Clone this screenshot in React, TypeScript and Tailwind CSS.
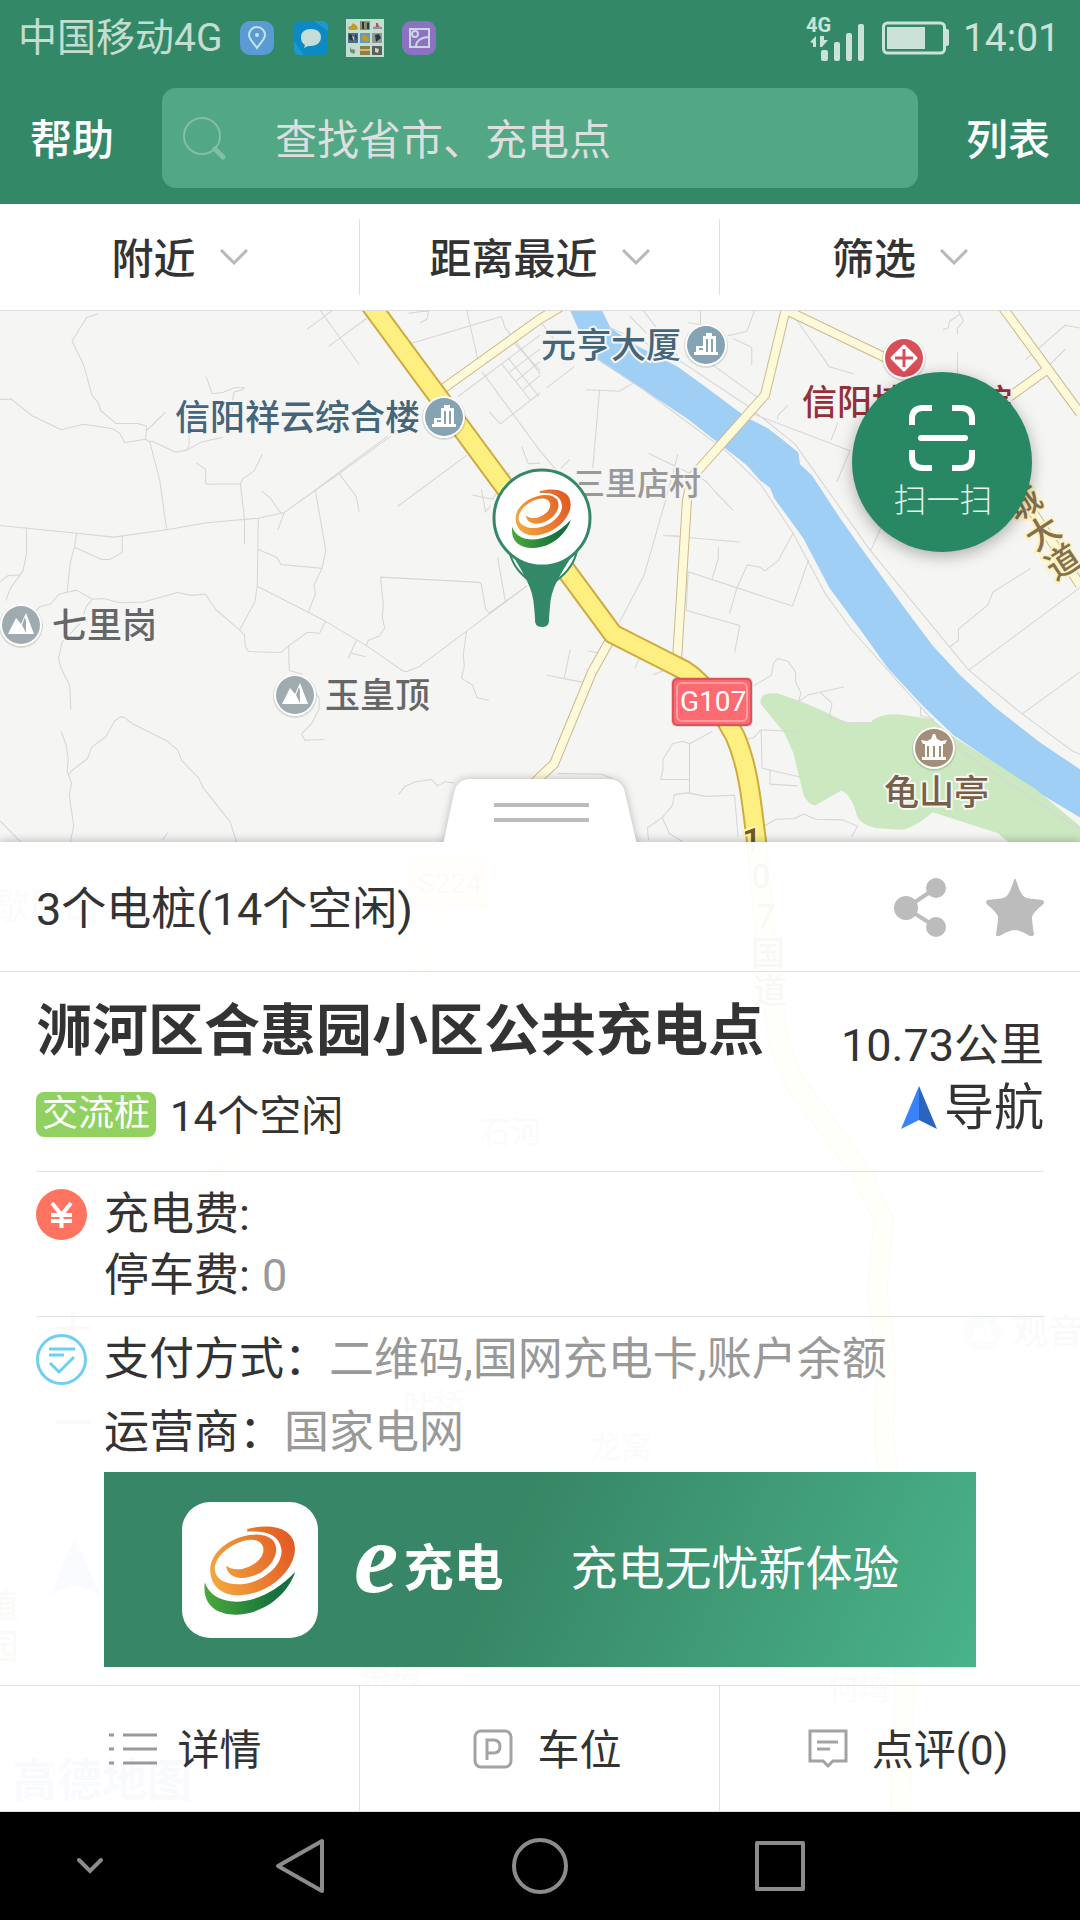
import React from 'react';

const ink = 'stroke-[#8c8c8c] fill-none';

function Logo({ x, y, width, height, id }: { x?: number; y?: number; width: number; height: number; id: string }) {
  return (
    <svg x={x} y={y} width={width} height={height} viewBox="590 705 272 273" preserveAspectRatio="none" aria-hidden="true">
      <defs>
        <linearGradient id={id + 'o'} x1="0" y1="0.6" x2="1" y2="0.3">
          <stop offset="0" stopColor="#f3a53e" />
          <stop offset="1" stopColor="#e25a25" />
        </linearGradient>
        <linearGradient id={id + 'g'} x1="0" y1="0" x2="1" y2="0">
          <stop offset="0" stopColor="#4aa93c" />
          <stop offset="0.8" stopColor="#15713b" />
        </linearGradient>
      </defs>
      <path
        fill={`url(#${id}o)`}
        d="M718 720C780 702 858 712 856 782C852 850 772 917 690 917C636 915 608 880 611 835C616 780 682 737 745 736C788 737 806 760 801 790C792 834 745 864 702 865C675 864 658 850 657 828C668 838 688 842 706 838C742 828 770 802 764 774C758 752 734 748 708 755C664 768 624 804 624 840C626 872 662 888 708 883C774 873 822 822 817 780C810 736 772 724 718 728Z"
      />
      <path fill={`url(#${id}g)`} d="M595 878C622 960 756 958 857 847C834 918 764 971 690 974C622 975 588 940 595 878Z" />
    </svg>
  );
}

function Poi({ x, y, kind }: { x: number; y: number; kind: 'building' | 'hill' | 'temple' | 'hospital' }) {
  const tone = { building: '#86a3b3', hill: '#9fabb1', temple: '#a28e79', hospital: '#d94f58' }[kind];
  return (
    <g transform={`translate(${x} ${y})`}>
      <circle cy="1" r="22" fill="#000" opacity="0.12" />
      <circle r="21" fill="#fff" />
      <circle r="19" fill={tone} />
      {kind === 'building' && (
        <path fill="#fff" fillRule="evenodd" d="M-12 10v-3h2v-6h7v-10h3v-3h6v3h4v16h2v3zM0-6v13h2v-13zM5-6v13h2v-13zM-7 3v2h4v-2z" />
      )}
      {kind === 'hill' && <path fill="#fff" fillRule="evenodd" d="M-13 9L-5-7L0-1L5-12L13 9zM4-8L1 0L5 8L5-4z" />}
      {kind === 'temple' && (
        <path fill="#fff" d="M-1-14h2l2 5l4 2l6-1l-2 4h-2v13h3v3h-24v-3h3v-13h-2l-2-4l6 1l4-2zM-7-2v11h2v-11zM-1-2v11h2v-11zM5-2v11h2v-11z" fillRule="evenodd" />
      )}
      {kind === 'hospital' && (
        <>
          <path fill="#fff" stroke="#fff" strokeWidth="3" strokeLinejoin="round" d="M0-12L12 0L0 12L-12 0z" />
          <path stroke="#d94f58" strokeWidth="3" d="M0-9V9M-9 0H9" />
        </>
      )}
    </g>
  );
}

function MapCanvas() {
  return (
    <svg
      className="absolute inset-0 h-full w-full"
      viewBox="0 311 1080 1501"
      preserveAspectRatio="xMidYMin slice"
      role="img"
      aria-label="地图"
    >
      <rect x="0" y="311" width="1080" height="1501" fill="#f5f5f4" />
      <g transform="matrix(.3444 0 0 .3508 540 300)">
        <path
          fill="#a0cff5"
          d="M83 20L175 20L205 80L280 130L400 190L470 240L600 335L660 365L700 395L750 435L755 468L790 500L870 620L920 690L1060 880L1140 985L1220 1070L1320 1160L1450 1260L1568 1338V1475L1440 1400L1290 1300L1200 1240L1110 1155L1010 1050L930 940L840 820L765 680L680 565L668 535L640 515L600 470L540 425L430 340L300 255L200 190L160 165L110 80Z"
        />
        <path
          fill="#cbe8c0"
          d="M640 1150C640 1125 655 1118 690 1122L760 1145L820 1170L890 1205L960 1203Q990 1175 1050 1182L1140 1195L1200 1245L1290 1300L1440 1395L1568 1500V1560L1360 1545L1330 1520L1140 1460Q1080 1510 1045 1510L975 1505Q930 1495 920 1470Q905 1410 875 1398L800 1440Q780 1440 765 1410L735 1290L710 1235Z"
        />
      </g>
      <g fill="none" stroke="#d6d6d6" strokeWidth="3" strokeLinejoin="round">
        <g transform="matrix(.3444 0 0 .3508 0 300)">
          <path d="M284 40L252 50L209 117L243 185L267 272L285 292L292 315L337 352H400L426 360L423 397L362 406L348 380L328 367L243 354L178 370L93 330L32 282L0 284M423 397L435 405L464 515L484 655L330 676L223 665L0 643M484 655L600 635L750 622L825 606L915 542L1125 388M845 592L985 495L1135 388M435 402L446 404L510 434L543 428L585 405L648 391M426 372L480 320M549 380V415L543 428" />
          <path d="M599 220L616 267L648 263L680 250H710L705 256L680 262L675 285V318M570 465L597 482V522L603 525L698 524L705 510L738 487L762 440M698 524L710 626V697M760 545L785 565L817 610M825 606L807 655M750 622L747 816L740 860L696 941L627 883L596 838L557 842L516 834L417 861L347 863L300 851L268 853L222 827L173 838L145 868L118 873L100 890M747 816L895 890L945 916L1065 986L1168 1056L1180 1060L1217 1045L1355 944L1530 815M747 710L804 734L816 754L935 765L946 714L915 540M935 765L912 812L916 838L895 890M945 916L928 950L893 947L838 986L815 1005L722 1002L712 988L710 955L696 941M838 986L840 1056L875 1066L927 1135V1165L905 1207L876 1237L885 1255L942 1253" />
          <path d="M223 665L216 705L204 748L195 833M216 705L295 740H318L355 720V672M77 648V722L67 772L30 822L17 857M57 783L23 786L0 803M268 853L250 875L235 920L180 975L170 1022L176 1046L202 1098L206 1168M178 1230L193 1272L198 1310L195 1345L208 1377L201 1410L214 1500L204 1545M198 1355L208 1342L254 1307L267 1274L307 1245L333 1200L348 1189H359L385 1208L485 1257L516 1283L528 1313L577 1363L592 1393L668 1487L687 1545M0 1485L60 1545M472 1540L487 1518" />
          <path d="M985 495L1034 560L1043 603M1155 588L1355 443M1372 556L1430 568L1480 490M1398 540L1410 605L1425 585M1445 735L1468 862M1530 815L1420 893L1410 880L1398 812L1393 805L1105 790L1113 870L1110 905L1117 935L1101 958L1070 970L1062 986M1035 970L1011 1021M1020 1007L1062 1017M1355 944L1345 1010L1348 1045L1340 1078L1372 1098L1385 1133L1419 1142M930 30L1043 184M892 83L965 30M954 132L1065 52M1190 125L1456 47L1466 78L1568 210M1355 30L1390 180M1400 205L1568 430M1330 275L1568 100M1420 318L1453 353L1568 265M1515 418L1534 467L1568 465M1186 38L1245 30L1240 55L1220 65M1157 1410L1175 1387L1206 1373L1252 1367L1271 1385L1292 1373L1320 1377" />
          <path d="M1455 180L1540 285M1475 165L1565 275M1490 120L1568 200M1480 205L1568 140M1500 230L1568 175M1520 255L1568 215" />
        </g>
        <g transform="matrix(.3444 0 0 .3508 540 300)">
          <path d="M0 60L90 175M20 250L100 190M0 430L45 482M133 256L230 260L270 237M173 256L153 480M60 480L86 455M315 437L480 515L510 548L561 600M400 440L365 570L302 785L230 920M160 165L300 255L430 350L540 430L640 525L735 665L830 840L905 940L1100 1155L1230 1290L1568 1510" />
          <path d="M357 672H402M370 672L580 690M518 705V735L500 795M430 775L733 872L780 740M430 775L425 885L580 928L565 1005M550 895L572 820L602 755L640 762L652 772L690 745L735 665M20 1070L125 1090M88 995L70 1080M138 1000L190 1010M1568 820L1245 1055M1425 765L1315 833L1300 870L1215 938V970L1188 990" />
          <path d="M205 80L370 150L600 300L740 410L960 715L1190 990L1245 1055L1400 1180L1545 1285L1568 1295M990 650L960 715M1400 1180L1568 1060M260 45L310 95M300 30L400 160M466 30V70L430 65M623 30L600 90L545 102M560 110L615 135V185M480 170L650 290M740 50L840 190L910 210M620 325L900 430M720 300L690 330V340M865 350L845 400M900 430L862 518M1215 30L1230 60L1212 80V98M1170 85L1185 80L1190 60L1220 40M1212 150V210M1470 195L1525 140M1410 170L1525 72L1568 80" />
          <path d="M620 1100L672 1070L678 1035L690 1022L720 1030L742 1060V1090L758 1120L750 1145L780 1125L882 1103M815 1120L848 1150L840 1190L895 1205H955M590 1255L620 1248L642 1225L735 1230H748V1240M642 1225L645 1335L765 1362M668 1340V1380L748 1385M434 1265V1405M350 1367H434M350 1367L357 1340V1310L385 1265L414 1258L434 1265L500 1230M315 1540L312 1505L355 1475L385 1440L390 1410L430 1405L480 1415L565 1412L575 1530M355 1475L375 1520L415 1545M650 1500L685 1480L740 1478L765 1465L800 1480L880 1482L922 1500L905 1530M50 1350L180 1352L210 1365M276 1050L288 1020M328 1068L382 1048M1105 1160V1185L1145 1195" />
        </g>
      </g>
      <g fill="none" strokeLinejoin="round">
        <path stroke="#cdb98f" strokeWidth="10" d="M444 388L540 319L562 306M788 300L765 395L692 477L687 500L677 660M788 311L884 357L905 368M1001 305L1080 413M1048 369L1005 400M1025 500L1080 585M610 640L592 672L554 764L540 777L472 847L441 907L413 993L344 1053L300 1087L220 1170L138 1247L83 1283" />
        <path stroke="#fef9d8" strokeWidth="8" d="M444 388L540 319L562 306M788 300L765 395L692 477L687 500L677 660M788 311L884 357L905 368M1001 305L1080 413M1048 369L1005 400M1025 500L1080 585M610 640L592 672L554 764L540 777L472 847L441 907L413 993L344 1053L300 1087L220 1170L138 1247L83 1283" />
        <path stroke="#d0aa40" strokeWidth="21" d="M367 300L613 634L676 666C700 676 715 700 735 736C750 770 752 810 757 845L765 933L778 1040L793 1080L860 1170L884 1220L877 1290L886 1357L884 1440L888 1470L905 1673L900 1811" />
        <path stroke="#fef080" strokeWidth="17" d="M367 300L613 634L676 666C700 676 715 700 735 736C750 770 752 810 757 845L765 933L778 1040L793 1080L860 1170L884 1220L877 1290L886 1357L884 1440L888 1470L905 1673L900 1811" />
      </g>

      <rect x="671" y="677" width="82" height="50" rx="6" fill="#000" opacity="0.12" />
      <rect x="672" y="678" width="80" height="48" rx="5" fill="#e0525c" />
      <rect x="674" y="680" width="76" height="44" rx="4" fill="#fd6a71" />
      <rect x="677" y="683" width="70" height="38" rx="5" fill="none" stroke="#fe9ca0" strokeWidth="2" />
      <rect x="410" y="858" width="80" height="50" rx="4" fill="#fbe080" />

      <Poi x={706} y={345} kind="building" />
      <Poi x={444} y={417} kind="building" />
      <Poi x={21} y={625} kind="hill" />
      <Poi x={295} y={695} kind="hill" />
      <Poi x={904} y={358} kind="hospital" />
      <Poi x={934} y={748} kind="temple" />
      <Poi x={982} y={1332} kind="hill" />

      <g
        stroke="#f5f5f4"
        strokeWidth="4"
        strokeLinejoin="round"
        paintOrder="stroke"
        className="font-['Roboto','Noto_Sans_CJK_SC',sans-serif] text-[35px] font-medium"
      >
        <text x="541" y="358" fill="#44657a">元亨大厦</text>
        <text x="175" y="430" fill="#44657a">信阳祥云综合楼</text>
        <text x="802" y="415" fill="#943138">信阳博士医院</text>
        <text x="52" y="638" fill="#666">七里岗</text>
        <text x="325" y="708" fill="#666">玉皇顶</text>
        <text x="884" y="805" fill="#77604a">龟山亭</text>
        <text x="573" y="495" fill="#999" className="text-[32px]">三里店村</text>
        <text x="-6" y="919" fill="#999">歇凤山</text>
        <text x="480" y="1143" fill="#999" className="text-[31px]">石河</text>
        <text x="190" y="1120" fill="#bbb" className="text-[31px]">十三里店</text>
        <text x="403" y="1416" fill="#999" className="text-[31px]">叶桥</text>
        <text x="590" y="1458" fill="#999" className="text-[31px]">龙窝</text>
        <text x="1013" y="1344" fill="#777">观音山</text>
        <text x="360" y="1682" fill="#999" className="text-[31px]">秦塆</text>
        <text x="828" y="1700" fill="#999" className="text-[31px]">何塆</text>
        <text x="-16" y="1618" fill="#7a9a5a">植</text>
        <text x="-16" y="1659" fill="#7a9a5a">园</text>
        <text x="12" y="1797" fill="#6f7fd8" className="text-[45px] font-bold">高德地图</text>
      </g>
      <g
        stroke="#fdf3c0"
        strokeWidth="4"
        paintOrder="stroke"
        textAnchor="middle"
        className="font-['Roboto','Noto_Sans_CJK_SC',sans-serif] text-[34px] font-medium"
      >
        <text transform="translate(1024 503) rotate(-33)" y="12" fill="#85704f">城</text>
        <text transform="translate(1043 533) rotate(-33)" y="12" fill="#85704f">大</text>
        <text transform="translate(1063 562) rotate(-33)" y="12" fill="#85704f">道</text>
        <text x="752" y="852" fill="#6f5a20">1</text>
        <text x="761" y="888" fill="#6f5a20">0</text>
        <text x="766" y="928" fill="#6f5a20">7</text>
        <text x="768" y="966" fill="#6f5a20">国</text>
        <text x="770" y="1003" fill="#6f5a20">道</text>
      </g>
      <g className="font-['Roboto'] text-[28px]">
        <text x="680" y="711" fill="#fff">G107</text>
        <text x="418" y="893" fill="#777">S224</text>
      </g>
      <path d="M56 1328H90M73 1311V1345M56 1422H90" stroke="#777" strokeWidth="4" />
      <path d="M75 1537L100 1595L75 1584L50 1595Z" fill="#7f96f0" />

      <path fill="#fff" stroke="#338967" strokeWidth="2" d="M509 550C512 565 520 574 530 581L556 581C568 572 575 562 577 550Z" />
      <path fill="#338967" d="M513 556C528 568 558 568 572 556C560 575 551 588 550 606L549 618Q550 627 542 627Q534 627 535 618L534 606C533 588 524 575 513 556Z" />
      <circle cx="542" cy="518" r="48" fill="#fff" stroke="#338967" strokeWidth="3" />
      <Logo x={511} y={488} width={61} height={61} id="pin" />
    </svg>
  );
}

function Chevron() {
  return (
    <svg width="28" height="17" viewBox="0 0 28 17" fill="none" stroke="#b8b8b8" strokeWidth="3" aria-hidden="true">
      <path d="M1 1L14 14L27 1" />
    </svg>
  );
}

function StatusBar() {
  return (
    <div className="flex h-[76px] items-center pl-[18px] pr-5 text-[39px] text-[#c3ddd1]">
      <span>中国移动4G</span>
      <svg className="ml-[18px]" width="34" height="34" viewBox="0 0 34 34" aria-hidden="true">
        <rect width="34" height="34" rx="10" fill="#5a9bd3" />
        <path fill="none" stroke="#c7e3e6" strokeWidth="2" d="M17 27C13 21 9 18 9 14a8 8 0 0 1 16 0C25 18 21 21 17 27z" />
        <circle cx="17" cy="14" r="2" fill="#c7e3e6" />
      </svg>
      <svg className="ml-5" width="34" height="34" viewBox="0 0 34 34" aria-hidden="true">
        <rect width="34" height="34" rx="6" fill="#0d8ac4" />
        <path fill="#1b9ad0" d="M0 20L10 34H6Q0 34 0 28zM20 0H28Q34 0 34 6V10z" />
        <path fill="#c3ddd8" d="M17 8c6 0 10 3 10 8s-4 9-10 9h-3l-4 2l1-3c-3-2-4-4-4-8c0-5 4-8 10-8z" />
      </svg>
      <svg className="ml-[18px]" width="38" height="38" viewBox="0 0 38 38" aria-hidden="true">
        <rect width="38" height="38" fill="#c3ddd1" />
        <path fill="#8d8b6c" d="M14 2h10v9H14z" />
        <path fill="#4d6a8c" d="M2 14h10v10H2z" />
        <path fill="#5f9cc0" d="M14 14h10v10H14z" />
        <path fill="#8a9a98" d="M26 14h10v10H26z" />
        <path fill="#8d7f4c" d="M14 27h10v9H14z" />
        <path fill="#59605a" d="M26 27h10v9H26z" />
        <path fill="#c09a2c" d="M2 8l3-1 2-3 4 3 1 3-3 1H3zM15 19l3-4 4 3 2 4-5 1z" />
        <path fill="#2c3b30" d="M16 3h2v7h-2zM21 4h2v6h-2zM3 15l3 1 1 6-4-2zM9 15l2 2-1 5zM29 16l4-1 2 4-5 4z" />
        <path fill="#d9cfc6" d="M6 17l2 1v4zM29 29l4 1-1 4-3-1z" />
        <path fill="#8d93a8" d="M27 8l4-1 5 1v2h-9z" />
        <path fill="#b3574a" d="M30 4l2 0 1 4h-3zM6 30l3 1-1 3z" />
        <path fill="#5c9c7c" d="M4 28l2 3 3 2-1 2-4-2z" />
        <path fill="#d8b860" d="M14 30h10v2H14z" />
      </svg>
      <svg className="ml-[18px]" width="34" height="34" viewBox="0 0 34 34" aria-hidden="true">
        <rect width="34" height="34" rx="9" fill="#8e72c2" />
        <g fill="none" stroke="#c9d6e4" strokeWidth="2">
          <path d="M8 8H27V26H8zM14 26C14 20 19 16 27 16" />
          <circle cx="13" cy="13" r="3" />
        </g>
      </svg>
      <svg className="ml-auto" width="60" height="48" viewBox="0 0 60 48" fill="#cce1d8" aria-hidden="true">
        <text x="0" y="18" className="font-['Roboto'] text-[20px] font-bold">4G</text>
        <path d="M4 28l6-6v11H7v-4zM14 22h4v4h4l-6 7h-2z" />
        <rect x="15" y="36" width="7" height="11" rx="2" />
        <rect x="28" y="28" width="6" height="19" rx="2" />
        <rect x="40" y="19" width="6" height="28" rx="2" />
        <rect x="52" y="10" width="6" height="37" rx="2" />
      </svg>
      <svg className="ml-4" width="67" height="34" viewBox="0 0 67 34" aria-hidden="true">
        <rect x="1.5" y="2" width="61" height="30" rx="4" fill="none" stroke="#cce1d8" strokeWidth="3" />
        <path fill="#cce1d8" d="M5 6H43V28H5zM63 8h2q2 0 2 2v13q0 2-2 2h-2z" />
      </svg>
      <span className="ml-[14px] text-[#cce1d8]">14:01</span>
    </div>
  );
}

function Header() {
  return (
    <header className="bg-[#338967]">
      <StatusBar />
      <div className="flex items-center gap-12 px-[30px] pt-3 pb-4 text-[42px] text-white">
        <button type="button" className="shrink-0 pt-1 font-medium">帮助</button>
        <label className="flex h-[100px] min-w-0 flex-1 items-center gap-12 rounded-[14px] bg-[#52a785] pl-5">
          <svg className="shrink-0" width="45" height="44" viewBox="0 0 45 44" fill="none" stroke="#83bfa5" aria-hidden="true">
            <circle cx="20" cy="20" r="18" strokeWidth="2" />
            <path d="M33 33L41 41" strokeWidth="5" strokeLinecap="round" />
          </svg>
          <input
            type="search"
            aria-label="查找"
            placeholder="查找省市、充电点"
            className="h-full w-full min-w-0 bg-transparent pt-1 outline-none placeholder:text-[#dedede]"
          />
        </label>
        <button type="button" className="shrink-0 pt-1 font-medium">列表</button>
      </div>
    </header>
  );
}

function Filters() {
  return (
    <nav className="grid h-[107px] grid-cols-3 items-center border-b border-[#dcdcdc] bg-white text-[42px]">
      {['附近', '距离最近', '筛选'].map((label, i) => (
        <button
          key={label}
          type="button"
          className={'flex h-[76px] items-center justify-center gap-6 ' + (i < 2 ? 'border-r border-[#e0e0e0]' : '')}
        >
          <span className="pt-1 font-medium">{label}</span>
          <Chevron />
        </button>
      ))}
    </nav>
  );
}

function ScanButton() {
  return (
    <button
      type="button"
      className="absolute top-[61px] right-12 flex h-[180px] w-[180px] flex-col items-center rounded-full bg-[#288863] pt-8 shadow-[0_4px_16px_rgba(0,0,0,0.3)]"
    >
      <svg width="68" height="68" viewBox="0 0 68 68" fill="none" stroke="#fff" strokeWidth="6" aria-hidden="true">
        <path d="M4 21V15Q4 4 15 4H24M44 4H53Q64 4 64 15V21M64 46V53Q64 64 53 64H44M24 64H15Q4 64 4 53V46" />
        <path d="M13 34H57" strokeLinecap="round" />
      </svg>
      <span className="mt-1 pl-[2px] text-[33px] leading-[50px] font-light text-[#e4f1ec]">扫一扫</span>
    </button>
  );
}

function StationInfo() {
  return (
    <section className="mx-9 flex items-start justify-between border-b border-[#e2e2e2] pt-6 pb-[31px]">
      <div>
        <h1 className="text-[56px] leading-[70px] font-bold">浉河区合惠园小区公共充电点</h1>
        <p className="mt-6 flex items-center gap-[14px] text-[42px] leading-[45px]">
          <span className="flex h-[45px] items-center rounded-lg bg-[#90d15f] px-[6px] text-[36px] text-white">交流桩</span>
          <span className="pt-1">14个空闲</span>
        </p>
      </div>
      <div className="mt-5 flex flex-col items-end">
        <span className="text-[45px] leading-[60px]">10.73公里</span>
        <button type="button" className="flex items-center gap-[6px] text-[50px] leading-[64px]">
          <svg width="38" height="44" viewBox="0 0 38 44" aria-hidden="true">
            <path fill="#3883fb" d="M19 0L1 43L19 34z" />
            <path fill="#2b63c0" d="M19 0L37 43L19 34z" />
          </svg>
          导航
        </button>
      </div>
    </section>
  );
}

function Sheet() {
  return (
    <div className="relative bg-white/96 shadow-[0_-2px_8px_rgba(0,0,0,0.2)]">
      <button type="button" aria-label="收起面板" className="absolute -top-[71px] left-1/2 -translate-x-1/2">
        <svg width="220" height="71" viewBox="0 0 220 71" aria-hidden="true">
          <path
            className="drop-shadow-[0_0_4px_rgba(0,0,0,0.25)]"
            fill="#fff"
            d="M13 74L24 22Q27 8 40 8H178Q192 8 195 22L207 74Z"
          />
          <path d="M64 34H159M64 49H159" stroke="#bcbcbc" strokeWidth="4" />
        </svg>
      </button>

      <section className="flex h-[130px] items-center justify-between border-b border-[#e2e2e2] px-9">
        <h2 className="pt-[6px] text-[45px]">3个电桩(14个空闲)</h2>
        <div className="flex items-center gap-10">
          <button type="button" aria-label="分享">
            <svg width="52" height="60" viewBox="0 0 52 60" fill="#bcbcbc" aria-hidden="true">
              <circle cx="12" cy="31" r="12" />
              <circle cx="42" cy="11" r="10" />
              <circle cx="42" cy="50" r="10" />
              <path d="M42 11L12 31L42 50" fill="none" stroke="#bcbcbc" strokeWidth="4" />
            </svg>
          </button>
          <button type="button" aria-label="收藏">
            <svg width="58" height="58" viewBox="0 0 58 58" fill="#bcbcbc" stroke="#bcbcbc" strokeWidth="2" strokeLinejoin="round" aria-hidden="true">
              <path d="M29 2Q34 18 38 20Q42 22 56 23Q58 24 56 26Q46 34 45 39Q45 45 47 56Q46 58 44 57Q34 51 29 51Q24 51 13 57Q11 58 11 56Q13 45 13 39Q12 34 2 26Q0 24 2 23Q16 22 20 20Q24 18 29 2Z" />
            </svg>
          </button>
        </div>
      </section>

      <StationInfo />

      <section className="mx-9 flex items-start gap-[17px] border-b border-[#e2e2e2] pt-3 pb-[10px] text-[45px] leading-[61px]">
        <svg className="mt-[5px] shrink-0" width="51" height="51" viewBox="0 0 51 51" aria-hidden="true">
          <circle cx="25.5" cy="25.5" r="25.5" fill="#ff7361" />
          <path d="M16 14L25.5 26L35 14M25.5 26V39M15 26H36M15 32H36" fill="none" stroke="#fff" strokeWidth="4" />
        </svg>
        <dl>
          <div className="flex gap-3">
            <dt>充电费:</dt>
            <dd />
          </div>
          <div className="flex gap-3">
            <dt>停车费:</dt>
            <dd className="text-[#999]">0</dd>
          </div>
        </dl>
      </section>

      <section className="mx-9 pt-[6px] pb-[18px]">
        <div className="flex items-start gap-[17px] text-[45px] leading-[73px]">
          <svg className="mt-[11px] shrink-0" width="51" height="51" viewBox="0 0 51 51" fill="none" stroke="#6dcff2" strokeWidth="3" aria-hidden="true">
            <circle cx="25.5" cy="25.5" r="24" />
            <path d="M13 15H39M13 21H28M14 29L23 38L38 23" />
          </svg>
          <dl>
            <div className="flex">
              <dt>支付方式：</dt>
              <dd className="text-[#999]">二维码,国网充电卡,账户余额</dd>
            </div>
            <div className="flex">
              <dt>运营商：</dt>
              <dd className="text-[#999]">国家电网</dd>
            </div>
          </dl>
        </div>
        <a
          href="#app"
          className="mt-[3px] mr-[68px] ml-[68px] flex h-[195px] items-center bg-linear-[115deg,#378665_45%,#49b389] pl-[78px] text-white"
        >
          <span className="flex h-[136px] w-[136px] items-center justify-center rounded-[28px] bg-white">
            <Logo width={94} height={92} id="banner" />
          </span>
          <span className="ml-9 flex items-center">
            <span className="pb-[22px] font-['Liberation_Serif'] text-[100px] leading-[100px] font-bold italic">e</span>
            <span className="ml-[5px] text-[50px] font-bold">充电</span>
          </span>
          <span className="ml-[67px] text-[47px] whitespace-nowrap">充电无忧新体验</span>
        </a>
      </section>

      <nav className="grid h-[127px] grid-cols-3 border-y border-[#e2e2e2] text-[42px]">
        <button type="button" className="flex items-center justify-center gap-5 border-r border-[#e2e2e2] pl-3">
          <svg className="stroke-[#999]" width="48" height="36" viewBox="0 0 48 36" strokeWidth="3" aria-hidden="true">
            <path d="M0 4H5M14 4H48M0 18H5M14 18H48M0 32H5M14 32H48" />
          </svg>
          <span className="pt-1">详情</span>
        </button>
        <button type="button" className="flex items-center justify-center gap-6 border-r border-[#e2e2e2] pl-4">
          <svg width="40" height="40" viewBox="0 0 40 40" fill="none" stroke="#a3a3a3" strokeWidth="3" aria-hidden="true">
            <rect x="2" y="2" width="36" height="36" rx="6" />
            <path d="M14 31V11H20Q27 11 27 17.5Q27 24 20 24H14" />
          </svg>
          <span className="pt-1">车位</span>
        </button>
        <button type="button" className="flex items-center justify-center gap-6 pl-4">
          <svg width="40" height="40" viewBox="0 0 40 40" fill="none" stroke="#a3a3a3" strokeWidth="3" aria-hidden="true">
            <path d="M2 2H38V32H25L20 37L15 32H2zM9 13H30M9 20H22" />
          </svg>
          <span className="pt-1">点评(0)</span>
        </button>
      </nav>
    </div>
  );
}

function SystemNav() {
  return (
    <nav className="grid h-[108px] grid-cols-[3fr_4fr_4fr_4fr_3fr] items-center justify-items-center bg-black">
      <button type="button" aria-label="隐藏">
        <svg className={ink} width="28" height="18" viewBox="0 0 28 18" strokeWidth="4" strokeLinecap="round" aria-hidden="true">
          <path d="M3 3L14 14L25 3" />
        </svg>
      </button>
      <button type="button" aria-label="返回">
        <svg className={ink} width="50" height="58" viewBox="0 0 50 58" strokeWidth="4" strokeLinejoin="round" aria-hidden="true">
          <path d="M47 4V54L3 29z" />
        </svg>
      </button>
      <button type="button" aria-label="主页">
        <svg className={ink} width="58" height="58" viewBox="0 0 58 58" strokeWidth="4" aria-hidden="true">
          <circle cx="29" cy="29" r="26" />
        </svg>
      </button>
      <button type="button" aria-label="最近任务">
        <svg className={ink} width="50" height="50" viewBox="0 0 50 50" strokeWidth="4" strokeLinejoin="round" aria-hidden="true">
          <path d="M2 2H48V48H2z" />
        </svg>
      </button>
    </nav>
  );
}

export default function App() {
  return (
    <div className="flex min-h-screen flex-col bg-white font-['Roboto','Noto_Sans_CJK_SC',sans-serif] text-[#333]">
      <Header />
      <Filters />
      <main className="relative flex flex-1 flex-col overflow-hidden">
        <MapCanvas />
        <div className="min-h-[531px] flex-1" />
        <ScanButton />
        <Sheet />
      </main>
      <SystemNav />
    </div>
  );
}
